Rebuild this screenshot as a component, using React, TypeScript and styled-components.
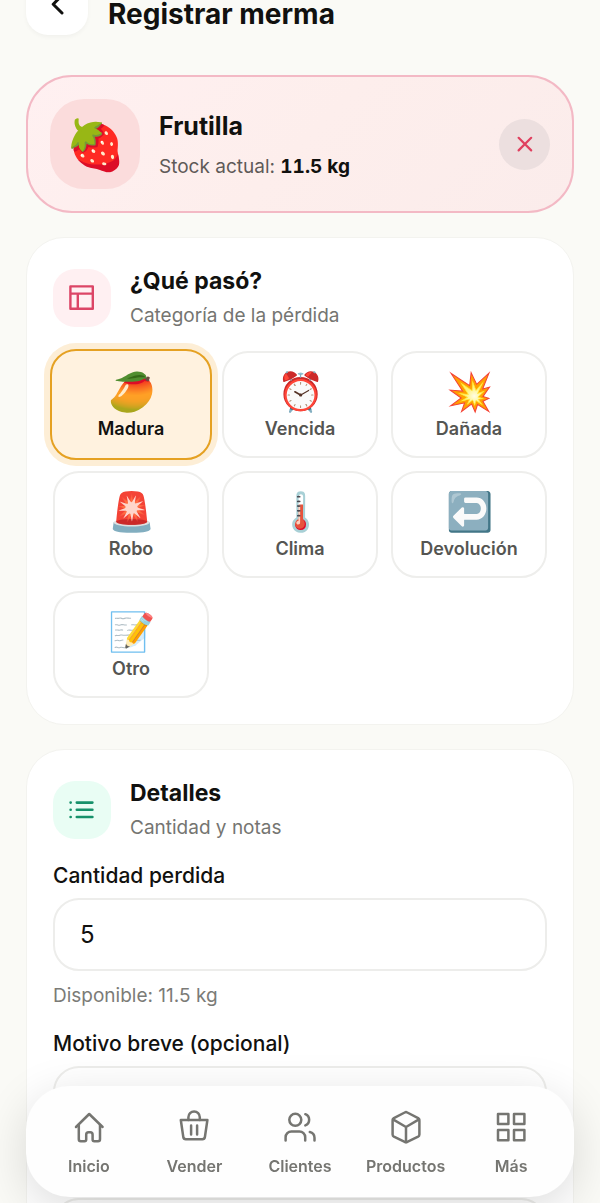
import * as React from "react";
import styled, {createGlobalStyle, css} from 'styled-components'


type Category = {
  id: string;
  emoji: string;
  label: string;
}

const categories: Category[] = [
  {id: 'madura', emoji: '🥭', label: 'Madura'},
  {id: 'vencida', emoji: '⏰', label: 'Vencida'},
  {id: 'danada', emoji: '💥', label: 'Dañada'},
  {id: 'robo', emoji: '🚨', label: 'Robo'},
  {id: 'clima', emoji: '🌡️', label: 'Clima'},
  {id: 'devolucion', emoji: '↩️', label: 'Devolución'},
  {id: 'otro', emoji: '📝', label: 'Otro'},
]

const GlobalStyle = createGlobalStyle`
    * {
        box-sizing: border-box;
    }

    body {
        margin: 0;
        background: #fafaf6;
        color: #11110f;
        font-family: Inter, "Liberation Sans", sans-serif;
    }

    button, input, textarea {
        font-family: inherit;
        color: inherit;
    }
`

const Screen = styled.div`
    height: 100vh;
    overflow-y: auto;
    scrollbar-width: none;
`

const Page = styled.main`
    display: flex;
    flex-direction: column;
    gap: 24px;
    padding: 24px 26px 140px;
`

const Header = styled.header`
    display: flex;
    align-items: flex-end;
    gap: 20px;
    margin-bottom: 16px;
`

const BackButton = styled.button`
    display: flex;
    align-items: center;
    justify-content: center;
    width: 62px;
    height: 62px;
    padding: 0;
    border: 0;
    border-radius: 22px;
    background: #fff;
    box-shadow: 0 2px 4px rgba(0, 0, 0, 0.04);
    cursor: pointer;
`

const PageTitle = styled.h1`
    margin: 0;
    font-size: 28px;
    line-height: 42px;
    font-weight: 700;
`

const ProductCard = styled.section`
    display: flex;
    align-items: center;
    gap: 19px;
    padding: 22px;
    border: 2px solid #f3b9c5;
    border-radius: 46px;
    background: linear-gradient(135deg, #fff0f1 0%, #fdeeec 50%, #fbeceb 100%);
`

const ProductEmoji = styled.div`
    display: flex;
    align-items: center;
    justify-content: center;
    width: 90px;
    height: 90px;
    border-radius: 34px;
    background: #fbdcdc;
    font-size: 49px;
    line-height: 1;
`

const ProductInfo = styled.div`
    flex: 1;
    padding-top: 2px;
`

const ProductName = styled.h2`
    margin: 0 0 13px;
    font-size: 25px;
    line-height: 30px;
    font-weight: 700;
`

const Stock = styled.p`
    margin: 0;
    font-size: 19px;
    line-height: 26px;
    color: #5f5a58;

    strong {
        font-weight: 700;
        font-variant-numeric: tabular-nums;
        color: #11110f;
    }
`

const ClearButton = styled.button`
    display: flex;
    align-items: center;
    justify-content: center;
    width: 51px;
    height: 51px;
    padding: 0;
    border: 0;
    border-radius: 50%;
    background: #ecdfdf;
    color: #e0405f;
    cursor: pointer;
`

const Card = styled.section`
    padding: 29px 26px 26px;
    border: 1px solid #f3f3ef;
    border-radius: 38px;
    background: #fff;
`

const CardHeader = styled.div`
    display: flex;
    align-items: center;
    gap: 19px;
    margin-bottom: 22px;
`

const CardIcon = styled.div<{ $tone: 'rose' | 'green' }>`
    display: flex;
    align-items: center;
    justify-content: center;
    width: 58px;
    height: 58px;
    border-radius: 22px;
    color: ${p => p.$tone === 'rose' ? '#dc4566' : '#16916a'};
    background: ${p => p.$tone === 'rose' ? '#fff0f2' : '#e9fdf4'};
`

const CardTitle = styled.h2`
    margin: 0 0 8px;
    font-size: 23px;
    line-height: 28px;
    font-weight: 700;
`

const CardSubtitle = styled.p`
    margin: 0;
    font-size: 19px;
    line-height: 26px;
    color: #757571;
`

const CategoryGrid = styled.div`
    display: grid;
    grid-template-columns: repeat(3, 1fr);
    gap: 13px;
`

const CategoryButton = styled.button<{ $active: boolean }>`
    display: flex;
    flex-direction: column;
    align-items: center;
    justify-content: center;
    gap: 6px;
    min-height: 107px;
    padding: 0;
    border: 2px solid #eeeeec;
    border-radius: 26px;
    background: #fff;
    color: #555552;
    font-size: 18px;
    line-height: 22px;
    font-weight: 600;
    cursor: pointer;

    ${p => p.$active && css`
        margin: -2px -3px;
        border-color: #e5a122;
        background: #fff2df;
        color: #11110f;
        box-shadow: 0 0 0 6px #fdeed6;
    `}
`

const CategoryEmoji = styled.span`
    font-size: 38px;
    line-height: 42px;
`

const Field = styled.div`
    display: flex;
    flex-direction: column;
    gap: 9px;
    margin-bottom: 23px;
`

const Label = styled.label`
    font-size: 21px;
    line-height: 26px;
    font-weight: 500;
`

const inputStyles = css`
    width: 100%;
    padding: 0 25px;
    border: 2px solid #ededeb;
    border-radius: 26px;
    background: #fff;
    font-size: 24px;
    outline: none;
`

const TextInput = styled.input`
    ${inputStyles}
    height: 73px;
`

const TextArea = styled.textarea`
    ${inputStyles}
    height: 120px;
    margin-top: 36px;
    padding: 20px 25px;
    resize: none;
`

const Hint = styled.p`
    margin: 0;
    padding-top: 4px;
    font-size: 19px;
    line-height: 24px;
    color: #7b7b77;
`

const BottomNav = styled.nav`
    position: fixed;
    left: 26px;
    right: 26px;
    bottom: 6px;
    display: grid;
    grid-template-columns: repeat(5, 1fr);
    padding: 23px 10px 20px;
    border-radius: 44px;
    background: #fefefe;
    box-shadow: 0 12px 48px rgba(0, 0, 0, 0.14);
`

const NavLink = styled.a`
    display: flex;
    flex-direction: column;
    align-items: center;
    gap: 10px;
    font-size: 16px;
    line-height: 22px;
    font-weight: 600;
    color: #757571;
    text-decoration: none;
`

type PropsIcon = {
  size: number;
  stroke?: number;
  children: React.ReactNode;
}

const Icon = (p: PropsIcon) => (
  <svg width={p.size} height={p.size} viewBox={`0 0 ${p.size} ${p.size}`} fill="none" stroke="currentColor"
       strokeWidth={p.stroke ?? 2.5} strokeLinecap="round" strokeLinejoin="round" aria-hidden="true">
    {p.children}
  </svg>
)

const navItems = [
  {
    label: 'Inicio',
    icon: <>
      <path d="M5 18 18.2 5 31.6 18"/>
      <path d="M7.8 16v14.2a2 2 0 0 0 2 2h3.7a1.7 1.7 0 0 0 1.7-1.7v-4.8a2.4 2.4 0 0 1 2.4-2.4h1.6a2.4 2.4 0 0 1 2.4 2.4v4.8a1.7 1.7 0 0 0 1.7 1.7h3.7a2 2 0 0 0 2-2V16"/>
    </>
  },
  {
    label: 'Vender',
    icon: <>
      <path d="M4.8 11h26.6l-2.5 17a2.6 2.6 0 0 1-2.6 2.2H9.9A2.6 2.6 0 0 1 7.3 28z"/>
      <path d="M12.4 11V8.2a5.7 5.7 0 0 1 11.4 0V11M15.1 16.5v9M21.1 16.5v9"/>
    </>
  },
  {
    label: 'Clientes',
    icon: <>
      <circle cx="13.3" cy="10.8" r="6"/>
      <path d="M3.6 31.6v-3.4a5.8 5.8 0 0 1 5.8-5.8h8a5.8 5.8 0 0 1 5.8 5.8v3.4"/>
      <path d="M23.3 5.2a6 6 0 0 1 0 11.2M27.8 23a6 6 0 0 1 4.7 5.8v2.8"/>
    </>
  },
  {
    label: 'Productos',
    icon: <>
      <path d="M31.4 25.4V11.4a2.6 2.6 0 0 0-1.3-2.2L19.3 3.5a2.6 2.6 0 0 0-2.6 0L5.9 9.2a2.6 2.6 0 0 0-1.3 2.2v14a2.6 2.6 0 0 0 1.3 2.2l10.8 5.2a2.6 2.6 0 0 0 2.6 0l10.8-5.2a2.6 2.6 0 0 0 1.3-2.2z"/>
      <path d="M5 10.4 18 18l13-7.6M18 18v15"/>
    </>
  },
  {
    label: 'Más',
    icon: <>
      <path d="M5 5h10.4v9.9H5zM21 5h10.4v9.9H21zM5 20.9h10.4v10.3H5zM21 20.9h10.4v10.3H21z"/>
    </>
  },
]

const App = () => {
  const screenRef = React.useRef<HTMLDivElement>(null);
  const [category, setCategory] = React.useState('madura');
  const [amount, setAmount] = React.useState('5');

  React.useLayoutEffect(() => {
    if (screenRef.current) screenRef.current.scrollTop = 51;
  }, [])

  return (
    <>
      <GlobalStyle/>
      <Screen ref={screenRef}>
        <Page>
          <Header>
            <BackButton type="button" aria-label="Volver">
              <Icon size={30} stroke={3}>
                <path d="M20 6.4 11.2 15.2 20 24"/>
              </Icon>
            </BackButton>
            <PageTitle>Registrar merma</PageTitle>
          </Header>

          <ProductCard>
            <ProductEmoji>🍓</ProductEmoji>
            <ProductInfo>
              <ProductName>Frutilla</ProductName>
              <Stock>Stock actual: <strong>11.5 kg</strong></Stock>
            </ProductInfo>
            <ClearButton type="button" aria-label="Quitar producto">
              <Icon size={24} stroke={2.2}>
                <path d="M5.6 5.8l12.6 12.6M18.2 5.8 5.6 18.4"/>
              </Icon>
            </ClearButton>
          </ProductCard>

          <Card>
            <CardHeader>
              <CardIcon $tone="rose">
                <Icon size={28} stroke={2.4}>
                  <path d="M2.4 2.4h22.4v22.4H2.4zM2.4 9.6h22.4M9.8 9.6v15.2"/>
                </Icon>
              </CardIcon>
              <div>
                <CardTitle>¿Qué pasó?</CardTitle>
                <CardSubtitle>Categoría de la pérdida</CardSubtitle>
              </div>
            </CardHeader>
            <CategoryGrid>
              {categories.map(x => (
                <CategoryButton key={x.id} type="button" $active={category === x.id}
                                aria-pressed={category === x.id} onClick={() => setCategory(x.id)}>
                  <CategoryEmoji>{x.emoji}</CategoryEmoji>
                  {x.label}
                </CategoryButton>
              ))}
            </CategoryGrid>
          </Card>

          <Card>
            <CardHeader>
              <CardIcon $tone="green">
                <Icon size={28} stroke={2.6}>
                  <path d="M8.8 6.6h15.6M8.8 13.8h15.6M8.8 21h15.6M2.6 6.6h.1M2.6 13.8h.1M2.6 21h.1"/>
                </Icon>
              </CardIcon>
              <div>
                <CardTitle>Detalles</CardTitle>
                <CardSubtitle>Cantidad y notas</CardSubtitle>
              </div>
            </CardHeader>
            <Field>
              <Label htmlFor="cantidad">Cantidad perdida</Label>
              <TextInput id="cantidad" inputMode="decimal" value={amount}
                         onChange={(e) => setAmount(e.currentTarget.value)}/>
              <Hint>Disponible: 11.5 kg</Hint>
            </Field>
            <Field>
              <Label htmlFor="motivo">Motivo breve (opcional)</Label>
              <TextInput id="motivo"/>
            </Field>
            <TextArea aria-label="Notas"/>
          </Card>
        </Page>
      </Screen>
      <BottomNav>
        {navItems.map(x => (
          <NavLink key={x.label} href="#">
            <Icon size={36}>{x.icon}</Icon>
            {x.label}
          </NavLink>
        ))}
      </BottomNav>
    </>
  );
};

export default App;
